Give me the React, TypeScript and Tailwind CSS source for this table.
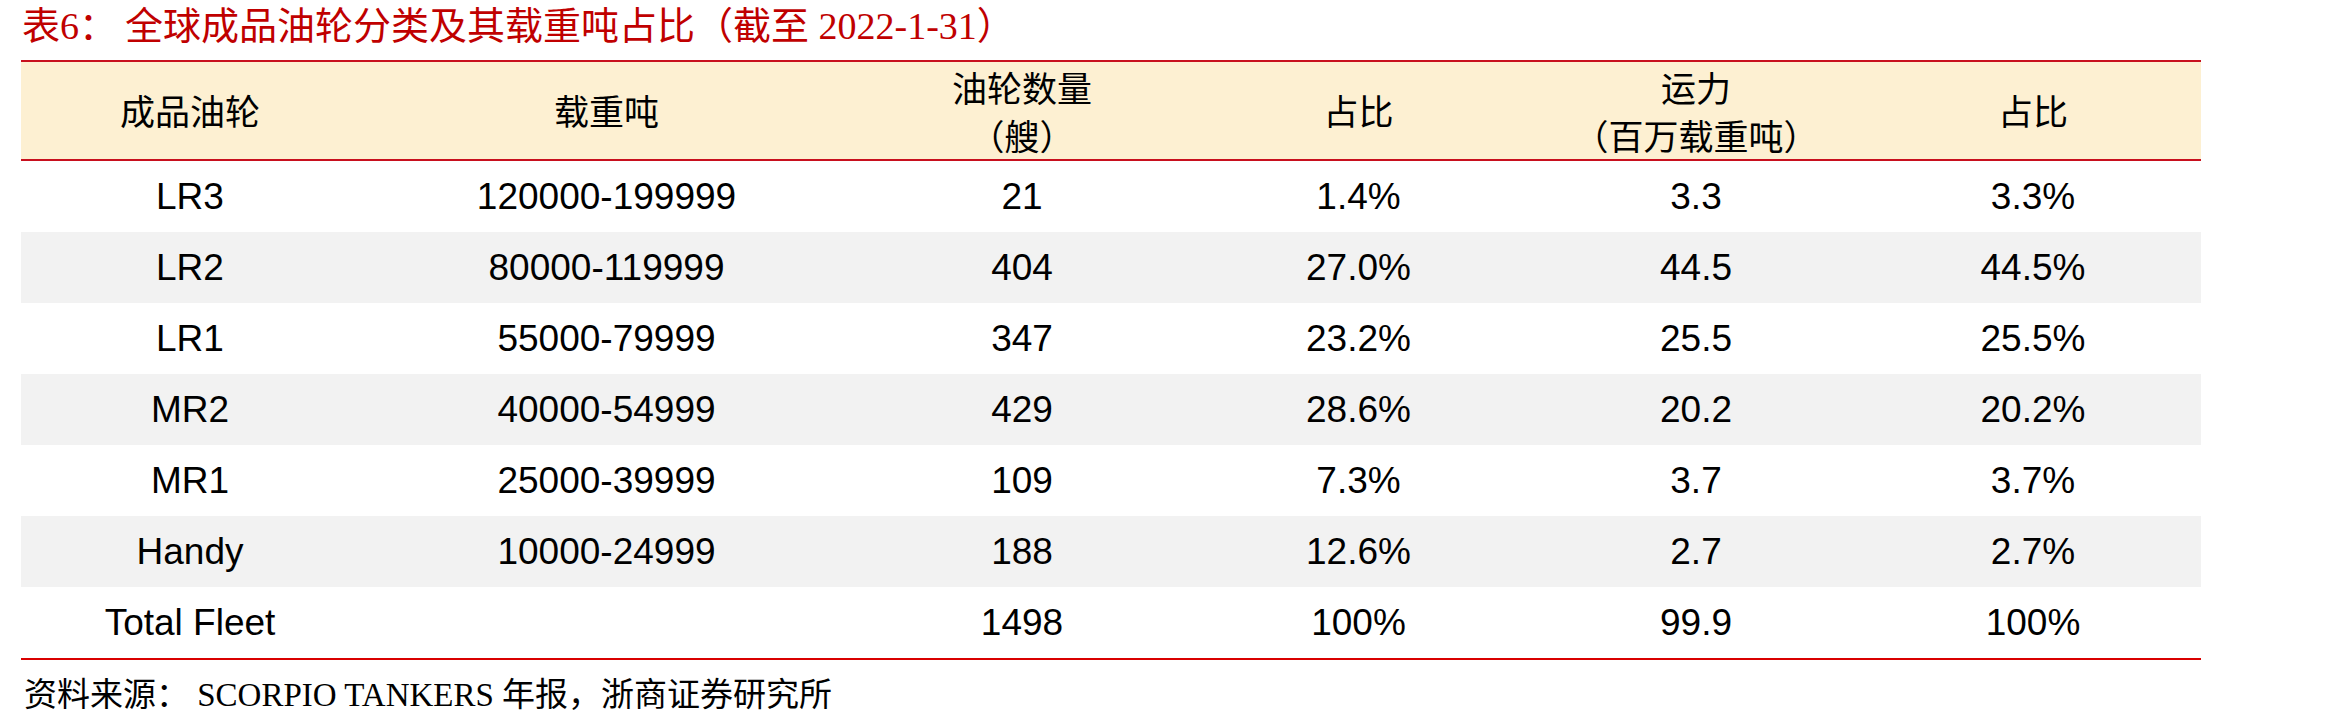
import React from "react";

const cols = "grid grid-cols-[338px_495px_336px_337px_338px_336px]";

const rows: string[][] = [
  ["LR3", "120000-199999", "21", "1.4%", "3.3", "3.3%"],
  ["LR2", "80000-119999", "404", "27.0%", "44.5", "44.5%"],
  ["LR1", "55000-79999", "347", "23.2%", "25.5", "25.5%"],
  ["MR2", "40000-54999", "429", "28.6%", "20.2", "20.2%"],
  ["MR1", "25000-39999", "109", "7.3%", "3.7", "3.7%"],
  ["Handy", "10000-24999", "188", "12.6%", "2.7", "2.7%"],
  ["Total Fleet", "", "1498", "100%", "99.9", "100%"],
];

export default function App() {
  return (
    <div className="w-[2330px] h-[727px] bg-white overflow-hidden">
      <div
        className="h-[52px] pl-[22px] flex items-center text-[38px] text-[#c00000] whitespace-pre"
        style={{ fontFamily: '"Liberation Serif", "Noto Sans CJK SC", serif' }}
      >
        <span>表6：</span>
        <span className="ml-[8px]">全球成品油轮分类及其载重吨占比（截至 2022-1-31）</span>
      </div>

      <div className="ml-[21px] w-[2180px] mt-[8px]">
        <div
          className={`${cols} h-[101px] bg-[#fdf0d2] border-t-2 border-b-2 border-[#c8101e] text-[35px] text-black`}
          style={{ fontFamily: '"Noto Sans CJK SC", sans-serif' }}
        >
          <div className="flex items-center justify-center">成品油轮</div>
          <div className="flex items-center justify-center">载重吨</div>
          <div className="flex flex-col items-center justify-center leading-[48px]">
            <span>油轮数量</span>
            <span>（艘）</span>
          </div>
          <div className="flex items-center justify-center">占比</div>
          <div className="flex flex-col items-center justify-center leading-[48px]">
            <span>运力</span>
            <span>（百万载重吨）</span>
          </div>
          <div className="flex items-center justify-center">占比</div>
        </div>

        <div
          className="border-b-2 border-[#d90000] text-[37px] text-black"
          style={{ fontFamily: '"Liberation Sans", Arial, sans-serif' }}
        >
          {rows.map((r, i) => (
            <div
              key={i}
              className={`${cols} h-[71px] ${i % 2 === 1 ? "bg-[#f2f2f2]" : "bg-white"}`}
            >
              {r.map((c, j) => (
                <div key={j} className="flex items-center justify-center">
                  {c}
                </div>
              ))}
            </div>
          ))}
        </div>
      </div>

      <div
        className="mt-[16px] pl-[24px] h-[40px] flex items-center text-[33px] text-black whitespace-pre"
        style={{ fontFamily: '"Liberation Serif", "Noto Sans CJK SC", serif' }}
      >
        资料来源： SCORPIO TANKERS 年报，浙商证券研究所
      </div>
    </div>
  );
}
